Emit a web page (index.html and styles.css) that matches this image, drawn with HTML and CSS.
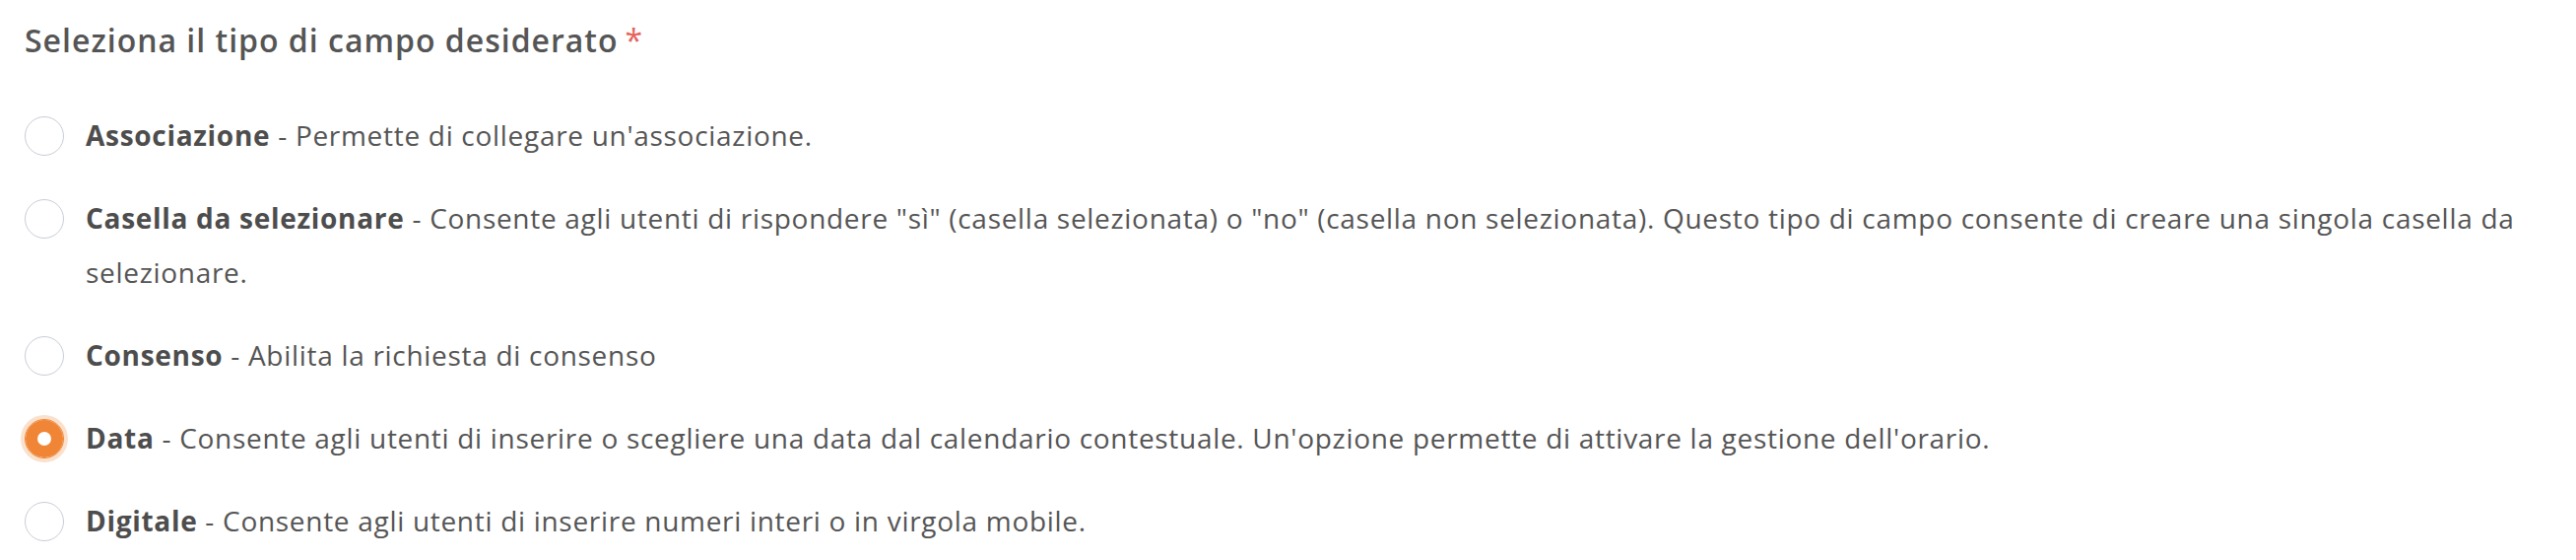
FILE: index.html
```html
<!DOCTYPE html>
<html lang="it">
<head>
    <meta charset="UTF-8">
    <meta name="viewport" content="width=device-width, initial-scale=1.0">
    <title>Tipo di campo</title>
    <link rel="stylesheet" href="styles.css">
</head>
<body>
    <div class="field-picker">
        <h2 class="field-title">Seleziona il tipo di campo desiderato<span class="required">*</span></h2>

        <div class="options">
            <label class="option">
                <input type="radio" name="tipoCampo" value="associazione">
                <span class="option-text"><strong>Associazione</strong> - Permette di collegare un'associazione.</span>
            </label>

            <label class="option">
                <input type="radio" name="tipoCampo" value="casella">
                <span class="option-text"><strong>Casella da selezionare</strong> - Consente agli utenti di rispondere "sì" (casella selezionata) o "no" (casella non selezionata). Questo tipo di campo consente di creare una singola casella da selezionare.</span>
            </label>

            <label class="option">
                <input type="radio" name="tipoCampo" value="consenso">
                <span class="option-text"><strong>Consenso</strong> - Abilita la richiesta di consenso</span>
            </label>

            <label class="option">
                <input type="radio" name="tipoCampo" value="data" checked>
                <span class="option-text"><strong>Data</strong> - Consente agli utenti di inserire o scegliere una data dal calendario contestuale. Un'opzione permette di attivare la gestione dell'orario.</span>
            </label>

            <label class="option">
                <input type="radio" name="tipoCampo" value="digitale">
                <span class="option-text"><strong>Digitale</strong> - Consente agli utenti di inserire numeri interi o in virgola mobile.</span>
            </label>
        </div>
    </div>
</body>
</html>
```

FILE: styles.css
```css
body {
    margin: 0;
    background-color: #ffffff;
    font-family: 'Open Sans', 'Noto Sans', sans-serif;
    color: #555555;
    font-variant-ligatures: none;
}
.field-picker {
    padding: 17px 25px 0 25px;
}
.field-title {
    margin: 0 0 45px 0;
    font-size: 32px;
    line-height: 48px;
    font-weight: 600;
    letter-spacing: 1px;
    color: #555555;
}
.required {
    color: #e5625c;
    margin-left: 7px;
    font-weight: 400;
}
.option {
    display: flex;
    align-items: flex-start;
    gap: 22px;
    margin-bottom: 29px;
    cursor: pointer;
}
.option input[type="radio"] {
    appearance: none;
    -webkit-appearance: none;
    flex: 0 0 auto;
    width: 40px;
    height: 40px;
    margin: 7.5px 0 0 0;
    border: 1.5px solid #c8cdd6;
    border-radius: 50%;
    background-color: #ffffff;
    cursor: pointer;
}
.option input[type="radio"]:checked {
    border-color: #ef8535;
    box-shadow: inset 0 0 0 12px #ef8535, 0 0 0 4px #fbe0cc;
}
.option-text {
    font-size: 28px;
    line-height: 55px;
    letter-spacing: 0.7px;
    color: #555555;
}
.option-text strong {
    font-weight: 700;
    color: #4d4d4d;
}
```
